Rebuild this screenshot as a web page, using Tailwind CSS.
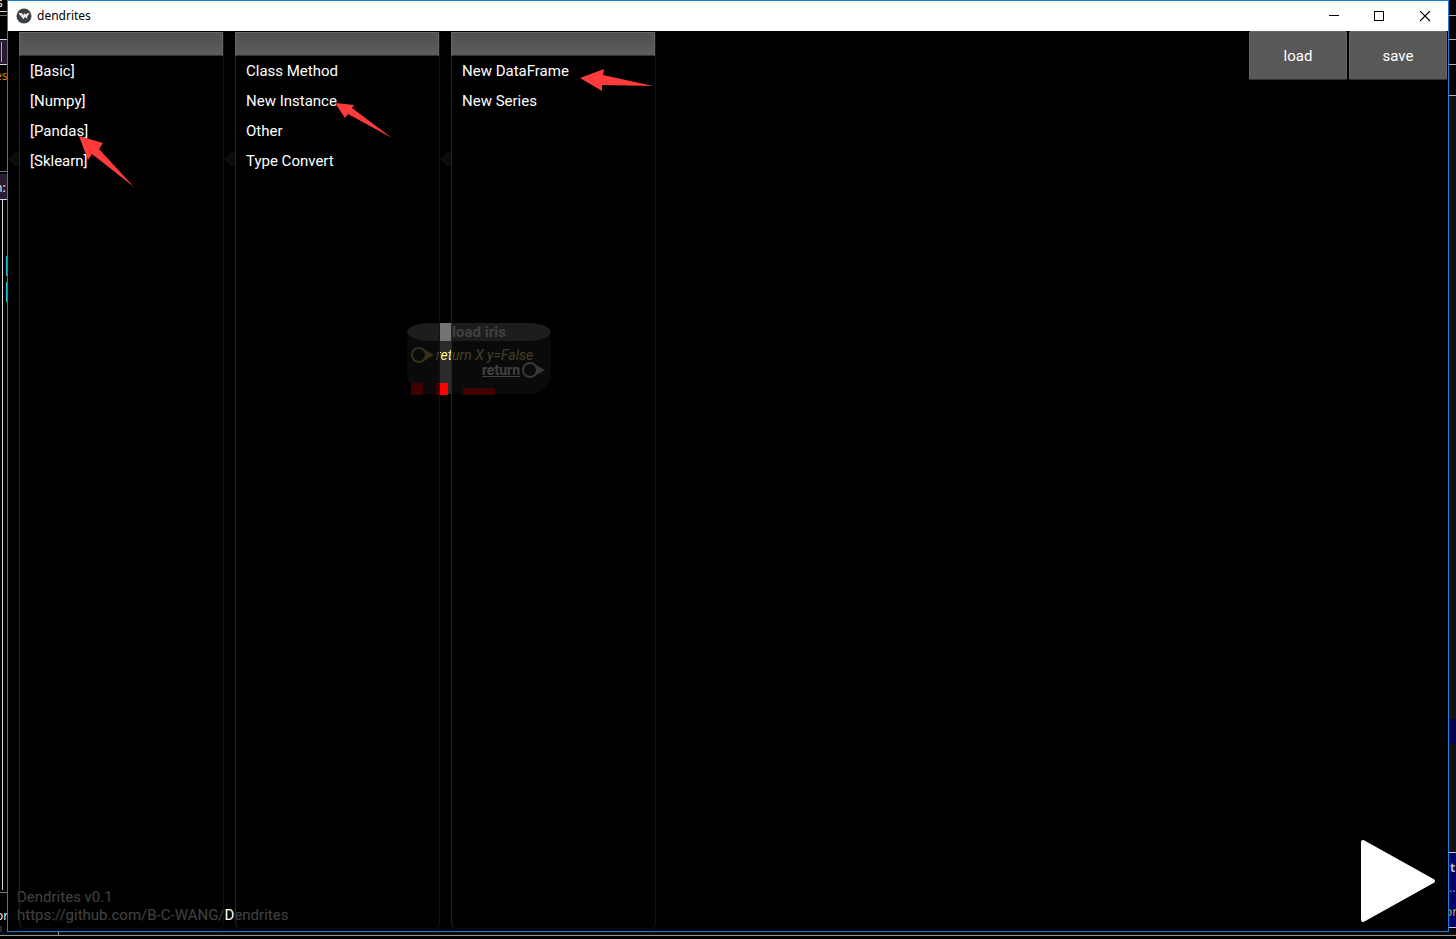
<!DOCTYPE html>
<html lang="en">
<head>
<meta charset="utf-8">
<title>dendrites</title>
<script src="https://cdn.jsdelivr.net/npm/@tailwindcss/browser@4"></script>
</head>
<body class="bg-black text-white font-['Roboto',sans-serif]">
<div class="relative h-screen overflow-hidden bg-black">

  <!-- Desktop behind the window: left edge -->
  <svg class="absolute left-0 top-0 h-full w-[7px]" shape-rendering="crispEdges" aria-hidden="true">
    <path d="M0 11.5H7M0 39.5H7M0 64.5H7M0 199.5H7" stroke="#d8d8d8"/>
    <path d="M0 15.5H7M0 171.5H7M0 892.5H7" stroke="#777"/>
    <path d="M0 40h7v24H0zM0 174h7v25H0z" fill="#291b31"/>
    <path d="M1.500 42V62" stroke="#aaa"/>
    <path d="M2.500 200V890" stroke="#ddd"/>
    <path d="M6 256h1v20h-1zM6 282h1v20h-1z" fill="#18c4d4"/>
    <path d="M0 926h2v8H0z" fill="#2a2a2a"/>
    <g font-family="Noto Sans, sans-serif" font-size="12">
      <text x="-3" y="7" fill="#eee">s</text>
      <text x="-5" y="80" fill="#d4790c">es</text>
      <text x="-5" y="192" fill="#eee">n:</text>
      <text x="-4" y="920" fill="#eee">or</text>
    </g>
  </svg>
  <!-- Desktop behind the window: right edge -->
  <svg class="absolute right-0 top-0 h-full w-[7px]" shape-rendering="crispEdges" aria-hidden="true">
    <path d="M0 96h7v756H0z" fill="#111"/>
    <path d="M0 15.500H7M0 39.500H7M0 64.500H7M0 95.500H7" stroke="#aaa"/>
    <path d="M0 719h7v25H0z" fill="#00004d"/>
    <path d="M0 853h7v74H0z" fill="#000066"/>
    <path d="M0 852.500H7M0 927.500H7" stroke="#ccc"/>
    <g font-family="Noto Sans, sans-serif" font-size="12">
      <text x="1" y="872" fill="#bbb" font-weight="700">t</text>
      <text x="0" y="892" fill="#999">..</text>
      <text x="-4" y="916" fill="#a4b43c">or</text>
    </g>
  </svg>
  <!-- Desktop behind the window: bottom edge -->
  <div class="absolute inset-x-0 bottom-0 h-[7px] bg-[#0c0c0c]">
    <div class="ml-[58px] h-[3px] w-px bg-[#999]"></div>
    <div class="h-px bg-[#999]"></div>
    <div class="h-[3px] bg-black"></div>
  </div>

  <main class="absolute inset-x-[7px] top-0 bottom-[7px] flex flex-col border border-[#1a82d8] bg-black">
    <header class="flex h-[30px] shrink-0 items-center bg-white text-black">
      <svg class="ml-2 size-4" viewBox="0 0 16 16" aria-hidden="true">
        <circle cx="8" cy="8" r="7.500" fill="#3c3f42"/>
        <path d="M2.300 5L6 5.200L7.300 7.500L8 5.200L10.300 6.500L11 5.200L14 5.500L11.800 7.300L10.600 10.800L9 8.800L7.400 11.300Z" fill="#fff"/>
        <path d="M4.500 5.500L7 10M8.300 6L9.600 9" stroke="#aaa" stroke-width=".5"/>
      </svg>
      <h1 class="ml-[5px] flex-1 font-['Noto_Sans',sans-serif] text-[12px] leading-4">dendrites</h1>
      <button class="flex h-full w-[46px] items-center justify-center" aria-label="Minimize">
        <svg class="h-[11px] w-[11px]" viewBox="0 0 11 11" fill="none" stroke="#000" shape-rendering="crispEdges"><path d="M1 4.500H11"/></svg>
      </button>
      <button class="flex h-full w-[46px] items-center justify-center" aria-label="Maximize">
        <svg class="h-[11px] w-[11px]" viewBox="0 0 11 11" fill="none" stroke="#000" shape-rendering="crispEdges"><path d="M.5 .5H9.500V9.500H.5Z"/></svg>
      </button>
      <button class="flex h-full w-[46px] items-center justify-center" aria-label="Close">
        <svg class="h-[11px] w-[11px]" viewBox="0 0 11 11" fill="none" stroke="#000" stroke-width="1.200"><path d="M0 0L10 10M10 0L0 10"/></svg>
      </button>
    </header>

    <div class="relative flex min-h-0 flex-1 justify-between overflow-hidden">
      <!-- Node placed on the canvas -->
      <section class="absolute left-[399px] top-[292px] h-[71px] w-36 rounded-[20px] bg-[#2b2b2b]">
        <h2 class="h-[18px] rounded-[24px/9px] bg-[#747474] text-center text-[15px] leading-[18px] font-bold">load iris</h2>
        <div class="mt-[6px] flex h-4 items-center pl-1">
          <svg class="h-4 w-[23px]" viewBox="0 0 23 16"><circle cx="8" cy="8" r="7" fill="none" stroke="#d8c468" stroke-width="2"/><path d="M14 3L23 8L14 13Q16 8 14 3Z" fill="#d8c468"/></svg>
          <span class="ml-[2px] text-[14px] leading-4 whitespace-nowrap text-[#fff08c] italic">return X y=False</span>
        </div>
        <div class="-mt-px flex h-4 items-center justify-end pr-[6px]">
          <span class="text-[14px] leading-4 font-bold underline">return</span>
          <svg class="ml-[2px] h-4 w-[23px]" viewBox="0 0 23 16"><circle cx="8" cy="8" r="7" fill="none" stroke="#ddd" stroke-width="2"/><path d="M14 3L23 8L14 13Q16 8 14 3Z" fill="#ddd"/></svg>
        </div>
        <div class="mt-[5px] flex items-end pl-1">
          <span class="size-3 bg-[#ff0000]"></span>
          <span class="ml-[13px] size-3 bg-[#ff0000]"></span>
          <span class="ml-[15px] h-[7px] w-8 bg-[#ff0000]"></span>
        </div>
      </section>

      <footer class="absolute bottom-[7px] left-[9px] text-[15px] leading-[18px]">
        <p>Dendrites v0.1</p>
        <a href="https://github.com/B-C-WANG/Dendrites">https://github.com/B-C-WANG/Dendrites</a>
      </footer>

      <!-- Translucent menu columns, with a scroll gutter on the left -->
      <nav class="relative flex gap-[11px] pt-px pb-[2px] text-[15px]" aria-label="Node menu">
        <div class="-mr-[11px] w-[11px] bg-black/75"></div>
        <ul class="w-[205px] rounded-b-md border border-t-0 border-[#111] border-b-[#080808] border-l-[#242424] bg-black/75">
          <li class="-ml-px h-6 border border-[#666] border-b-[#333] bg-linear-to-b from-[#505050] to-[#5c5c5c]"></li>
          <li><button class="block h-[30px] w-full pl-[10px] text-left">[Basic]</button></li>
          <li><button class="block h-[30px] w-full pl-[10px] text-left">[Numpy]</button></li>
          <li><button class="block h-[30px] w-full pl-[10px] text-left">[Pandas]</button></li>
          <li><button class="block h-[30px] w-full pl-[10px] text-left">[Sklearn]</button></li>
        </ul>
        <ul class="w-[205px] rounded-b-md border border-t-0 border-[#111] border-b-[#080808] border-l-[#242424] bg-black/75">
          <li class="-ml-px h-6 border border-[#666] border-b-[#333] bg-linear-to-b from-[#505050] to-[#5c5c5c]"></li>
          <li><button class="block h-[30px] w-full pl-[10px] text-left">Class Method</button></li>
          <li><button class="block h-[30px] w-full pl-[10px] text-left">New Instance</button></li>
          <li><button class="block h-[30px] w-full pl-[10px] text-left">Other</button></li>
          <li><button class="block h-[30px] w-full pl-[10px] text-left">Type Convert</button></li>
        </ul>
        <ul class="w-[205px] rounded-b-md border border-t-0 border-[#111] border-b-[#080808] border-l-[#242424] bg-black/75">
          <li class="-ml-px h-6 border border-[#666] border-b-[#333] bg-linear-to-b from-[#505050] to-[#5c5c5c]"></li>
          <li><button class="block h-[30px] w-full pl-[10px] text-left">New DataFrame</button></li>
          <li><button class="block h-[30px] w-full pl-[10px] text-left">New Series</button></li>
        </ul>
      </nav>

      <div class="relative flex flex-col items-end justify-between pb-2">
        <div class="flex gap-[2px] pr-px text-[15px]">
          <button class="h-[49px] w-[98px] rounded-[2px] border border-[#686868] border-b-[#333] bg-[#585858] pt-[2px]">load</button>
          <button class="h-[49px] w-[98px] rounded-[2px] border border-[#686868] border-b-[#333] bg-[#585858] pt-[2px]">save</button>
        </div>
        <button class="mr-3" aria-label="Run">
          <svg class="h-[84px] w-[76px]" viewBox="0 0 76 84"><path d="M3 3L73 42L3 81Z" fill="#fff" stroke="#fff" stroke-width="4" stroke-linejoin="round"/></svg>
        </button>
      </div>
    </div>
  </main>

  <!-- Pointer arrows and menu connectors laid over the window -->
  <svg class="pointer-events-none absolute left-0 top-0 h-[200px] w-[660px]" viewBox="0 0 660 200" aria-hidden="true">
    <path d="M8 159L15 152H19V166H15ZM224 159L231 152H235V166H231ZM440 159L447 152H451V166H447Z" fill="#0c0c0c"/>
    <g fill="#ff3b3b">
      <path d="M79 136L103 143L99 149L134 187L92 154L88 160Z"/>
      <path d="M335 103L354 105L352 108L392 138L348 114L345 118Z"/>
      <path d="M580 78L604 69L603 75L653 86L602 85L602 91Z"/>
    </g>
  </svg>
</div>
</body>
</html>
